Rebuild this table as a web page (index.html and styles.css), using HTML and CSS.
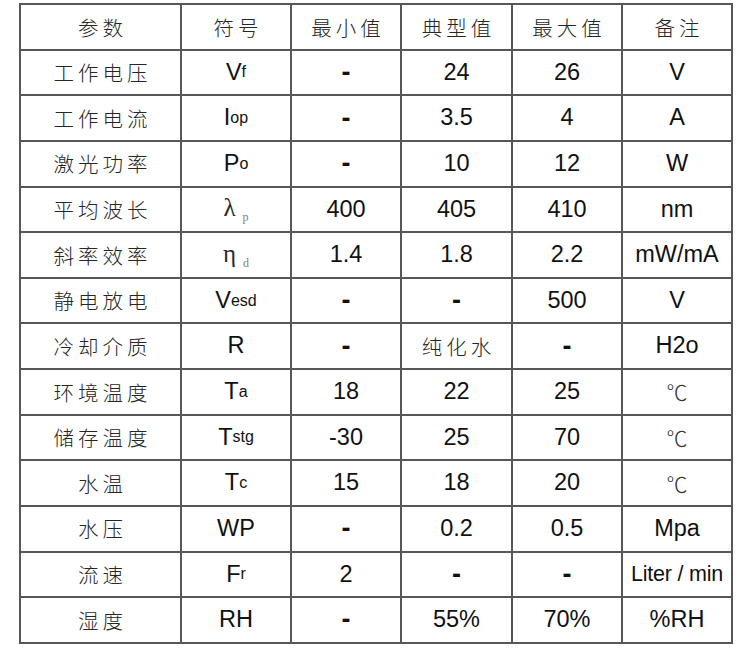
FILE: index.html
```html
<!DOCTYPE html>
<html lang="zh-CN">
<head>
<meta charset="utf-8">
<title>参数表</title>
<link rel="stylesheet" href="styles.css">
</head>
<body>
<div class="sheet">
  <div class="c"><span class="zh">参数</span></div>
  <div class="c"><span class="zh">符号</span></div>
  <div class="c"><span class="zh">最小值</span></div>
  <div class="c"><span class="zh">典型值</span></div>
  <div class="c"><span class="zh">最大值</span></div>
  <div class="c"><span class="zh">备注</span></div>

  <div class="c"><span class="zh">工作电压</span></div>
  <div class="c">V<small>f</small></div>
  <div class="c"><b class="dash">-</b></div>
  <div class="c">24</div>
  <div class="c">26</div>
  <div class="c">V</div>

  <div class="c"><span class="zh">工作电流</span></div>
  <div class="c">I<small>op</small></div>
  <div class="c"><b class="dash">-</b></div>
  <div class="c">3.5</div>
  <div class="c">4</div>
  <div class="c">A</div>

  <div class="c"><span class="zh">激光功率</span></div>
  <div class="c">P<small>o</small></div>
  <div class="c"><b class="dash">-</b></div>
  <div class="c">10</div>
  <div class="c">12</div>
  <div class="c">W</div>

  <div class="c"><span class="zh">平均波长</span></div>
  <div class="c"><span class="greek">λ<sub>p</sub></span></div>
  <div class="c">400</div>
  <div class="c">405</div>
  <div class="c">410</div>
  <div class="c">nm</div>

  <div class="c"><span class="zh">斜率效率</span></div>
  <div class="c"><span class="greek">η<sub>d</sub></span></div>
  <div class="c">1.4</div>
  <div class="c">1.8</div>
  <div class="c">2.2</div>
  <div class="c">mW/mA</div>

  <div class="c"><span class="zh">静电放电</span></div>
  <div class="c">V<small>esd</small></div>
  <div class="c"><b class="dash">-</b></div>
  <div class="c"><b class="dash">-</b></div>
  <div class="c">500</div>
  <div class="c">V</div>

  <div class="c"><span class="zh">冷却介质</span></div>
  <div class="c">R</div>
  <div class="c"><b class="dash">-</b></div>
  <div class="c"><span class="zh">纯化水</span></div>
  <div class="c"><b class="dash">-</b></div>
  <div class="c">H2o</div>

  <div class="c"><span class="zh">环境温度</span></div>
  <div class="c">T<small>a</small></div>
  <div class="c">18</div>
  <div class="c">22</div>
  <div class="c">25</div>
  <div class="c"><span class="deg">℃</span></div>

  <div class="c"><span class="zh">储存温度</span></div>
  <div class="c">T<small>stg</small></div>
  <div class="c">-30</div>
  <div class="c">25</div>
  <div class="c">70</div>
  <div class="c"><span class="deg">℃</span></div>

  <div class="c"><span class="zh">水温</span></div>
  <div class="c">T<small>c</small></div>
  <div class="c">15</div>
  <div class="c">18</div>
  <div class="c">20</div>
  <div class="c"><span class="deg">℃</span></div>

  <div class="c"><span class="zh">水压</span></div>
  <div class="c">WP</div>
  <div class="c"><b class="dash">-</b></div>
  <div class="c">0.2</div>
  <div class="c">0.5</div>
  <div class="c">Mpa</div>

  <div class="c"><span class="zh">流速</span></div>
  <div class="c">F<small>r</small></div>
  <div class="c">2</div>
  <div class="c"><b class="dash">-</b></div>
  <div class="c"><b class="dash">-</b></div>
  <div class="c"><span class="narrow">Liter / min</span></div>

  <div class="c"><span class="zh">湿度</span></div>
  <div class="c">RH</div>
  <div class="c"><b class="dash">-</b></div>
  <div class="c">55%</div>
  <div class="c">70%</div>
  <div class="c">%RH</div>
</div>
</body>
</html>
```

FILE: styles.css
```css
html, body {
  margin: 0;
  padding: 0;
  background: #ffffff;
}

body {
  width: 750px;
  height: 657px;
  overflow: hidden;
  font-family: "Liberation Sans", Arial, sans-serif;
  color: #111111;
}

.sheet {
  margin: 3px 0 0 19px;
  width: 714px;
  display: grid;
  grid-template-columns: 161px 110px 110px 111px 110px 110px;
  grid-auto-rows: 45.64px;
  border-left: 2px solid #575757;
  border-top: 2px solid #575757;
  box-sizing: border-box;
}

.c {
  box-sizing: border-box;
  border-right: 2px solid #575757;
  border-bottom: 2px solid #575757;
  display: flex;
  align-items: center;
  justify-content: center;
  font-size: 23.5px;
  line-height: 1;
  white-space: nowrap;
}

.c small {
  font-size: 16px;
}

.zh {
  font-family: "Noto Sans CJK SC", "Noto Sans CJK TC", sans-serif;
  font-weight: 300;
  font-size: 20.5px;
  letter-spacing: 4px;
  margin-right: -4px;
  color: #262626;
}

.greek {
  font-family: "Liberation Serif", "DejaVu Serif", serif;
  font-size: 25px;
  color: #2a2a2a;
}

.greek sub {
  font-size: 12px;
  color: #808080;
  margin-left: 7px;
  vertical-align: -5px;
}

.deg {
  font-family: "Noto Sans CJK SC", sans-serif;
  font-weight: 300;
  font-size: 21px;
  color: #333333;
}

.dash {
  font-weight: bold;
  font-size: 27px;
}

.narrow {
  font-size: 21.5px;
  letter-spacing: -0.2px;
}
```
